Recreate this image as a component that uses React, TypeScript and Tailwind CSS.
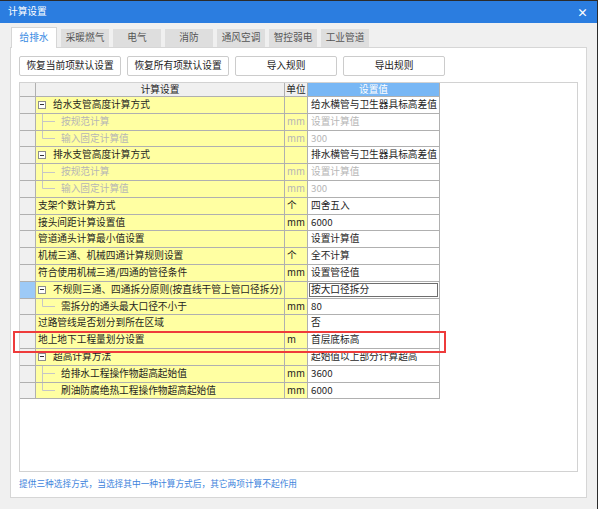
import React from 'react';

type Row = {
  name: string;
  unit?: string;
  value: string;
  kind: 'parent' | 'child' | 'last' | 'plain';
  disabled?: boolean;
  selected?: boolean;
};

const rows: Row[] = [
  { name: '给水支管高度计算方式', value: '给水横管与卫生器具标高差值', kind: 'parent' },
  { name: '按规范计算', unit: 'mm', value: '设置计算值', kind: 'child', disabled: true },
  { name: '输入固定计算值', unit: 'mm', value: '300', kind: 'last', disabled: true },
  { name: '排水支管高度计算方式', value: '排水横管与卫生器具标高差值', kind: 'parent' },
  { name: '按规范计算', unit: 'mm', value: '设置计算值', kind: 'child', disabled: true },
  { name: '输入固定计算值', unit: 'mm', value: '300', kind: 'last', disabled: true },
  { name: '支架个数计算方式', unit: '个', value: '四舍五入', kind: 'plain' },
  { name: '接头间距计算设置值', unit: 'mm', value: '6000', kind: 'plain' },
  { name: '管道通头计算最小值设置', value: '设置计算值', kind: 'plain' },
  { name: '机械三通、机械四通计算规则设置', unit: '个', value: '全不计算', kind: 'plain' },
  { name: '符合使用机械三通/四通的管径条件', unit: 'mm', value: '设置管径值', kind: 'plain' },
  {
    name: '不规则三通、四通拆分原则(按直线干管上管口径拆分)',
    value: '按大口径拆分',
    kind: 'parent',
    selected: true,
  },
  { name: '需拆分的通头最大口径不小于', unit: 'mm', value: '80', kind: 'last' },
  { name: '过路管线是否划分到所在区域', value: '否', kind: 'plain' },
  { name: '地上地下工程量划分设置', unit: 'm', value: '首层底标高', kind: 'plain' },
  { name: '超高计算方法', value: '起始值以上部分计算超高', kind: 'parent' },
  { name: '给排水工程操作物超高起始值', unit: 'mm', value: '3600', kind: 'child' },
  { name: '刷油防腐绝热工程操作物超高起始值', unit: 'mm', value: '6000', kind: 'last' },
];

const tabs = ['给排水', '采暖燃气', '电气', '消防', '通风空调', '智控弱电', '工业管道'];
const buttons = ['恢复当前项默认设置', '恢复所有项默认设置', '导入规则', '导出规则'];

// tree connector for child rows
const TreeLine = ({ last }: { last: boolean }) => (
  <svg width="25" height="17" className="shrink-0">
    <line x1="6.5" y1="0" x2="6.5" y2={last ? 8.5 : 17} stroke="#c6c6c6" strokeWidth="1" />
    <line x1="6.5" y1="8.5" x2="19" y2="8.5" stroke="#c6c6c6" strokeWidth="1" />
  </svg>
);

const MinusBox = () => (
  <span className="ml-[2px] mr-[7px] flex h-[8px] w-[8px] shrink-0 items-center justify-center border border-[#8c8c8c] bg-white">
    <span className="h-px w-[4px] bg-[#333]" />
  </span>
);

const App = () => {
  return (
    <div className="relative h-[509px] w-[598px] overflow-hidden border-t border-r border-[#2b2b2b] bg-[#f0f0f0] font-['Noto_Sans_CJK_SC',sans-serif] text-[9.7px] leading-none text-[#1e1e1e]">
      {/* title bar */}
      <div className="flex h-[22px] items-center justify-between bg-[#2b7de0] pl-[8px] pr-[9px] text-white">
        <span>计算设置</span>
        <span className="text-[11px] font-bold">×</span>
      </div>

      {/* tabs */}
      <div className="mt-[4px] flex items-end gap-[4px] pl-[11px]">
        {tabs.map((t, i) =>
          i === 0 ? (
            <div
              key={t}
              className="relative z-10 -mb-px flex h-[21px] w-[46px] items-center justify-center border border-b-0 border-[#d6d6d6] bg-white text-[#3a8be3]"
            >
              {t}
            </div>
          ) : (
            <div
              key={t}
              className="flex h-[18px] w-[48px] items-center justify-center bg-[#dedede] text-[#555]"
            >
              {t}
            </div>
          )
        )}
      </div>

      {/* tab panel */}
      <div className="ml-[10px] flex h-[451px] w-[577px] flex-col border border-[#d6d6d6] bg-white pl-[8px]">
        <div className="mt-[8px] flex gap-[6px]">
          {buttons.map((b) => (
            <button
              key={b}
              className="flex h-[20px] w-[102px] items-center justify-center rounded-[2px] border border-[#cccccc] bg-white text-[#222]"
            >
              {b}
            </button>
          ))}
        </div>

        <div className="mt-[6px] h-[390px] w-[559px] border border-[#d2d2d2] bg-white">
          {/* header */}
          <div className="flex h-[14px]">
            <div className="w-[16px] border-r border-b border-[#b0b0b0] bg-[#f0f0f0]" />
            <div className="flex w-[249px] items-center justify-center border-r border-b border-[#b0b0b0] bg-[#f0f0f0]">
              计算设置
            </div>
            <div className="flex w-[23px] items-center justify-center border-r border-b border-[#b0b0b0] bg-[#f0f0f0]">
              单位
            </div>
            <div className="flex w-[132px] items-center justify-center border-r border-b border-[#b0b0b0] bg-[#78b7f5] text-white">
              设置值
            </div>
          </div>

          {rows.map((r, i) => {
            const muted = r.disabled ? 'text-[#b6b6b6]' : '';
            return (
              <div key={i} className="flex h-[16.8px]">
                <div
                  className={
                    'w-[16px] border-r border-b border-[#b0b0b0] ' +
                    (r.selected ? 'bg-[#9dcaf7]' : 'bg-[#f0f0f0]')
                  }
                />
                <div
                  className={
                    'flex w-[249px] items-center overflow-hidden whitespace-nowrap border-r border-b border-[#b0b0b0] bg-[#ffffa2] ' +
                    muted
                  }
                >
                  {r.kind === 'parent' && <MinusBox />}
                  {(r.kind === 'child' || r.kind === 'last') && <TreeLine last={r.kind === 'last'} />}
                  {r.kind === 'plain' && <span className="w-[2px] shrink-0" />}
                  <span>{r.name}</span>
                </div>
                <div
                  className={
                    'flex w-[23px] items-center border-r border-b border-[#b0b0b0] bg-[#ffffa2] pl-[2px] ' +
                    muted
                  }
                >
                  {r.unit}
                </div>
                <div
                  className={
                    'flex w-[132px] items-center whitespace-nowrap border-r border-b border-[#b0b0b0] bg-white ' +
                    (r.selected ? 'p-px ' : 'pl-[3px] ') +
                    muted
                  }
                >
                  {r.selected ? (
                    <span className="flex h-full w-full items-center border border-[#6e6e6e] pl-[1px]">
                      {r.value}
                    </span>
                  ) : (
                    r.value
                  )}
                </div>
              </div>
            );
          })}
        </div>

        <p className="mt-[7px] text-[8.7px] leading-[10px] text-[#3d83dc]">
          提供三种选择方式，当选择其中一种计算方式后，其它两项计算不起作用
        </p>
      </div>

      {/* annotation box */}
      <div className="absolute left-[13px] top-[330px] h-[22px] w-[433px] border-2 border-[#ee3b3b]" />
    </div>
  );
};

export default App;
